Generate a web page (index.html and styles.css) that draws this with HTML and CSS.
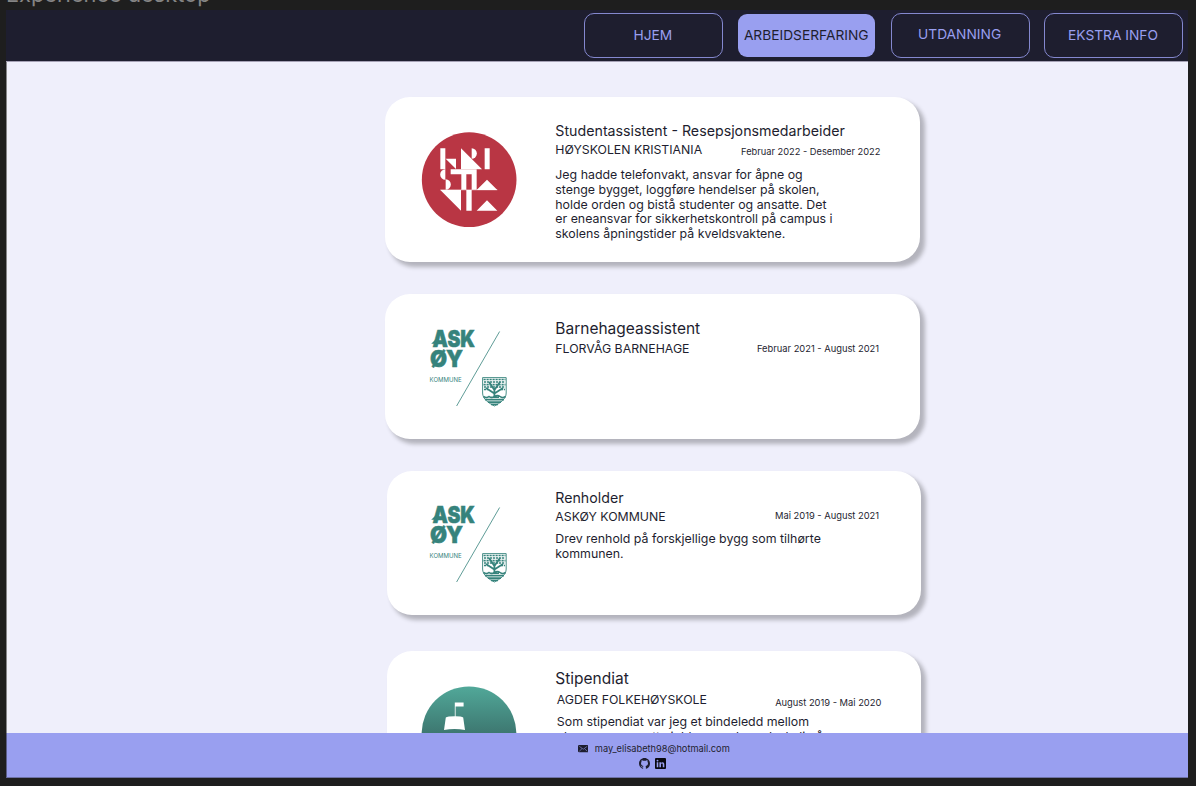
FILE: index.html
```html
<!DOCTYPE html>
<html lang="no">
<head>
<meta charset="utf-8">
<title>Arbeidserfaring</title>
<link rel="stylesheet" href="styles.css">
</head>
<body>
<div class="frame-label">Experience desktop</div>
<div class="frame">
  <header class="topbar">
    <nav class="nav">
      <a class="nav-item">HJEM</a>
      <a class="nav-item nav-item--active">ARBEIDSERFARING</a>
      <a class="nav-item nav-item--raised">UTDANNING</a>
      <a class="nav-item">EKSTRA INFO</a>
    </nav>
  </header>
  <main class="content">
    <article class="card card--kristiania">
      <svg class="round-logo" viewBox="34 38 288 288">
        <circle cx="178.500" cy="181" r="142" fill="#b93644"/>
        <g fill="#fff">
          <path d="M92 87h15v63H92zM108 118h31v31zM154 87l63 63H154zM225 87h15v63h-15z"/>
          <path d="M186 87a15.500 15.500 0 0 1 0 31z"/>
          <path d="M123 150h78v61h-15v-46h-16v46h-15v-46h-32z"/>
          <path d="M107 150v31a15.500 15.500 0 0 1 0-31zM108 180a15.500 15.500 0 0 1 0 31z"/>
          <path d="M92 212h62v62zM170 212h16v62h-16zM232 181l31 31h-62zM232 243l31 31h-62z"/>
          <path d="M92 210.500h171v2H92z" opacity=".65"/>
        </g>
      </svg>
      <div class="info">
        <h2 class="title">Studentassistent - Resepsjonsmedarbeider</h2>
        <div class="meta"><span class="place">HØYSKOLEN KRISTIANIA</span><span class="date">Februar 2022 - Desember 2022</span></div>
        <p class="text">Jeg hadde telefonvakt, ansvar for åpne og<br>stenge bygget, loggføre hendelser på skolen,<br>holde orden og bistå studenter og ansatte. Det<br>er eneansvar for sikkerhetskontroll på campus i<br>skolens åpningstider på kveldsvaktene.</p>
      </div>
    </article>
    <article class="card card--barnehage">
      <svg class="askoy-logo" viewBox="0 0 80 80">
        <g class="logo-ink">
          <text class="logo-bold" x="3.600" y="17.700" font-size="23" textLength="42.500" lengthAdjust="spacingAndGlyphs">ASK</text>
          <text class="logo-bold" x="1" y="38" font-size="23" textLength="33" lengthAdjust="spacingAndGlyphs">ØY</text>
          <text class="logo-thin" x=".6" y="53.200" font-size="6.600" textLength="32" lengthAdjust="spacingAndGlyphs">KOMMUNE</text>
          <path d="M2.200 14.800 8.500 8.800 12 14.800Z"/>
        </g>
        <path d="M70.600 2.500 27.600 77" stroke="#36837c" stroke-width=".8"/>
        <path d="M53.600 48.600h23.600v15.400c0 6-6 10-11.800 13-5.800-3-11.800-7-11.800-13z" fill="#fff" stroke="#36837c" stroke-width=".9"/>
        <g fill="none" stroke="#36837c">
          <path d="M65.400 69V59M65.400 64.500 57 59M65.400 64.500 74 59M65.400 61 60 53M65.400 61 71 53" stroke-width="1.800"/>
          <path d="M54.500 50.500h22M55 53h21M54.500 55.600h22M55 58h21M55 60.500h4M72 60.500h4" stroke-width="1.700" stroke-dasharray="2.200 .8"/>
          <path d="M61 68.300h9M54.500 67.500q3 2 5.500 0 2.500 2 5.500 0t5.500 0 5.500 0M56 70.600h19M59 73.100h13M62 75.400h7" stroke-width="1.600"/>
        </g>
      </svg>
      <div class="info">
        <h2 class="title">Barnehageassistent</h2>
        <div class="meta"><span class="place">FLORVÅG BARNEHAGE</span><span class="date">Februar 2021 - August 2021</span></div>
      </div>
    </article>
    <article class="card card--renholder">
      <svg class="askoy-logo" viewBox="0 0 80 80">
        <g class="logo-ink">
          <text class="logo-bold" x="3.600" y="17.700" font-size="23" textLength="42.500" lengthAdjust="spacingAndGlyphs">ASK</text>
          <text class="logo-bold" x="1" y="38" font-size="23" textLength="33" lengthAdjust="spacingAndGlyphs">ØY</text>
          <text class="logo-thin" x=".6" y="53.200" font-size="6.600" textLength="32" lengthAdjust="spacingAndGlyphs">KOMMUNE</text>
          <path d="M2.200 14.800 8.500 8.800 12 14.800Z"/>
        </g>
        <path d="M70.600 2.500 27.600 77" stroke="#36837c" stroke-width=".8"/>
        <path d="M53.600 48.600h23.600v15.400c0 6-6 10-11.800 13-5.800-3-11.800-7-11.800-13z" fill="#fff" stroke="#36837c" stroke-width=".9"/>
        <g fill="none" stroke="#36837c">
          <path d="M65.400 69V59M65.400 64.500 57 59M65.400 64.500 74 59M65.400 61 60 53M65.400 61 71 53" stroke-width="1.800"/>
          <path d="M54.500 50.500h22M55 53h21M54.500 55.600h22M55 58h21M55 60.500h4M72 60.500h4" stroke-width="1.700" stroke-dasharray="2.200 .8"/>
          <path d="M61 68.300h9M54.500 67.500q3 2 5.500 0 2.500 2 5.500 0t5.500 0 5.500 0M56 70.600h19M59 73.100h13M62 75.400h7" stroke-width="1.600"/>
        </g>
      </svg>
      <div class="info">
        <h2 class="title">Renholder</h2>
        <div class="meta"><span class="place">ASKØY KOMMUNE</span><span class="date">Mai 2019 - August 2021</span></div>
        <p class="text">Drev renhold på forskjellige bygg som tilhørte<br>kommunen.</p>
      </div>
    </article>
    <article class="card card--stipendiat">
      <svg class="round-logo" viewBox="0 0 96 96">
        <defs><linearGradient id="sea" x1="0" y1="0" x2="0" y2="1"><stop offset="0" stop-color="#51a899"/><stop offset=".5" stop-color="#3d7770"/><stop offset="1" stop-color="#2e5a55"/></linearGradient></defs>
        <circle cx="48" cy="47.800" r="47.400" fill="url(#sea)"/>
        <path d="M33.800 16.500h8.800v4h-8v9.700q6 0 7.600 1.200l1.800 12.600q-10.500-2-21 0l1.800-12.600q1.600-1.200 9-1.200z" fill="#fff"/>
      </svg>
      <div class="info">
        <h2 class="title">Stipendiat</h2>
        <div class="meta"><span class="place">AGDER FOLKEHØYSKOLE</span><span class="date">August 2019 - Mai 2020</span></div>
        <p class="text">Som stipendiat var jeg et bindeledd mellom<br>elevene og ansatte jobben var hovedsakelig å</p>
      </div>
    </article>
  </main>
  <footer class="footer">
    <div class="mail">
      <svg class="mail-icon" viewBox="0 0 20 14"><rect width="20" height="14" rx="2.500" fill="#1d1d2e"/><path d="M2.500 2.500 10 8l7.500-5.500M2.500 11.800 7.500 7M17.500 11.800 12.500 7" fill="none" stroke="#999ff0" stroke-width="1.100"/></svg>
      <span>may_elisabeth98@hotmail.com</span>
    </div>
    <div class="social">
      <svg class="social-icon" viewBox="0 0 16 16" fill="#1d1d2e"><path d="M8 0C3.580 0 0 3.580 0 8c0 3.540 2.290 6.530 5.470 7.590.4.070.55-.17.55-.38 0-.19-.010-.82-.010-1.490-2.010.37-2.530-.49-2.690-.94-.09-.23-.48-.94-.82-1.130-.28-.15-.68-.52-.010-.53.63-.010 1.080.58 1.230.82.72 1.210 1.870.87 2.330.66.070-.52.28-.87.510-1.070-1.780-.2-3.640-.89-3.640-3.950 0-.87.310-1.590.82-2.150-.08-.2-.36-1.020.08-2.120 0 0 .67-.21 2.200.82.64-.18 1.320-.27 2-.27s1.360.09 2 .27c1.530-1.040 2.200-.82 2.200-.82.44 1.100.16 1.920.08 2.120.51.56.82 1.270.82 2.150 0 3.070-1.870 3.750-3.650 3.950.29.25.54.73.54 1.480 0 1.070-.010 1.930-.010 2.200 0 .21.15.46.55.38A8.010 8.010 0 0 0 16 8c0-4.420-3.580-8-8-8z"/></svg>
      <svg class="social-icon" viewBox="0 0 16 16"><rect width="16" height="16" rx="1.500" fill="#08080f"/><path d="M2.500 6.200h2.300v7.300H2.500zM6.400 6.200h2.200v1c.4-.7 1.200-1.200 2.300-1.200 2.100 0 2.700 1.400 2.700 3.400v4.100h-2.300V9.800c0-1-.1-1.900-1.200-1.900s-1.400.8-1.400 1.900v3.700H6.400z" fill="#999ff0"/><circle cx="3.650" cy="3.800" r="1.350" fill="#999ff0"/></svg>
    </div>
  </footer>
</div>
</body>
</html>
```
FILE: styles.css
```css
* { box-sizing: border-box; }

body {
  margin: 0;
  height: 786px;
  overflow: hidden;
  background: #1e1e1e;
  color: #1e1e2f;
  font-family: Inter, "Liberation Sans", sans-serif;
}

.frame-label {
  display: flex;
  align-items: flex-end;
  height: 9.500px;
  padding-left: 6px;
  color: #858585;
  font-size: 21.800px;
  line-height: 32px;
  white-space: nowrap;
}

.frame {
  display: flex;
  flex-direction: column;
  width: 1182px;
  height: 768.500px;
  margin-left: 6px;
}

.topbar {
  flex: none;
  height: 52.500px;
  padding: 3.500px 5px 0 0;
  background: #1e1e2f;
  border-bottom: 1px solid #a5a1b5;
}

.nav {
  display: flex;
  justify-content: flex-end;
  gap: 14.400px;
}

.nav-item {
  display: flex;
  align-items: center;
  justify-content: center;
  width: 139px;
  height: 45px;
  padding: 0 1px 2px 0;
  border: 1px solid #8488cf;
  border-radius: 10px;
  color: #999ff0;
  font-size: 13.750px;
}

.nav-item--active {
  background: #999ff0;
  background-clip: padding-box;
  border-color: transparent;
  color: #1e1e2f;
}

.nav-item--raised { padding-bottom: 4px; }

.content {
  flex: 1;
  min-height: 0;
  overflow: hidden;
  padding: 35.400px 0 0 378px;
  background: #efeffb;
  border-left: 1px solid #868689;
}

.card {
  display: flex;
  width: 534.500px;
  height: 144.500px;
  margin-bottom: 32.200px;
  border-radius: 25px;
  background: #fff;
  box-shadow: 4.500px 4.500px 4px rgba(0, 0, 0, .25);
}

.card--kristiania {
  height: 164.500px;
  --logo-top: 35px;
  --info-top: 25px;
  --place-gap: 1.500px;
  --date-shift: 4.500px;
  --text-gap: 10.200px;
  --title-size: 14.220px;
  --date-size: 9.270px;
}

.card--barnehage {
  --logo-top: 35px;
  --info-top: 26px;
  --place-gap: 2.800px;
  --date-shift: 2.100px;
}

.card--renholder {
  margin-left: 1.500px;
  margin-bottom: 35.300px;
  --logo-top: 34.300px;
  --info-top: 18.100px;
  --place-gap: 2.100px;
  --date-shift: 1.200px;
  --text-gap: 7.200px;
  --title-size: 14.200px;
}

.card--stipendiat {
  margin-left: 1.500px;
  --logo-top: 35px;
  --info-top: 19.700px;
  --place-gap: 3.700px;
  --date-shift: 4.800px;
  --text-gap: 7.200px;
}

.round-logo {
  flex: none;
  width: 96px;
  height: 96px;
  margin: var(--logo-top) 38px 0 36.300px;
}

.askoy-logo {
  flex: none;
  width: 80px;
  height: 80px;
  margin: var(--logo-top) 46px 0 44.300px;
}

.card--renholder .askoy-logo { margin-left: 42.800px; }
.card--stipendiat .round-logo { margin-left: 34.800px; }

.logo-ink { fill: #36837c; }
.logo-bold { font-weight: 900; stroke: #36837c; stroke-width: .5px; }
.logo-thin { font-weight: 400; }

.info {
  width: 325px;
  padding-top: var(--info-top);
}

.title {
  margin: 0;
  font-size: var(--title-size, 15.500px);
  font-weight: 400;
  line-height: 18px;
  white-space: nowrap;
}

.meta {
  display: flex;
  justify-content: space-between;
  align-items: flex-start;
  height: 16px;
  margin-top: var(--place-gap);
  white-space: nowrap;
}

.place { font-size: 12.300px; line-height: 16px; }

.date {
  margin-top: var(--date-shift);
  font-size: var(--date-size, 9.330px);
  line-height: 12px;
}

.card--barnehage .meta,
.card--renholder .meta { padding-right: 1.200px; }

.text {
  margin: var(--text-gap) 0 0;
  font-size: 12.390px;
  line-height: 14.800px;
  white-space: nowrap;
}

.card--stipendiat .meta,
.card--stipendiat .text { padding-left: 1.500px; }
.card--stipendiat .meta { margin-right: -1px; }

.footer {
  flex: none;
  display: flex;
  flex-direction: column;
  height: 45px;
  padding-top: 9px;
  background: #999ff0;
  border-bottom: 1px solid #6d71a6;
  border-left: 1px solid #5b5e88;
}

.mail {
  display: flex;
  align-items: center;
  gap: 6.500px;
  height: 14px;
  margin-left: 570.800px;
  font-size: 9.240px;
  line-height: 14px;
}

.mail-icon { width: 10.500px; height: 7.400px; }

.social {
  display: flex;
  gap: 5.500px;
  margin: 2px 0 0 631.500px;
}

.social-icon { width: 11px; height: 11px; }
```
